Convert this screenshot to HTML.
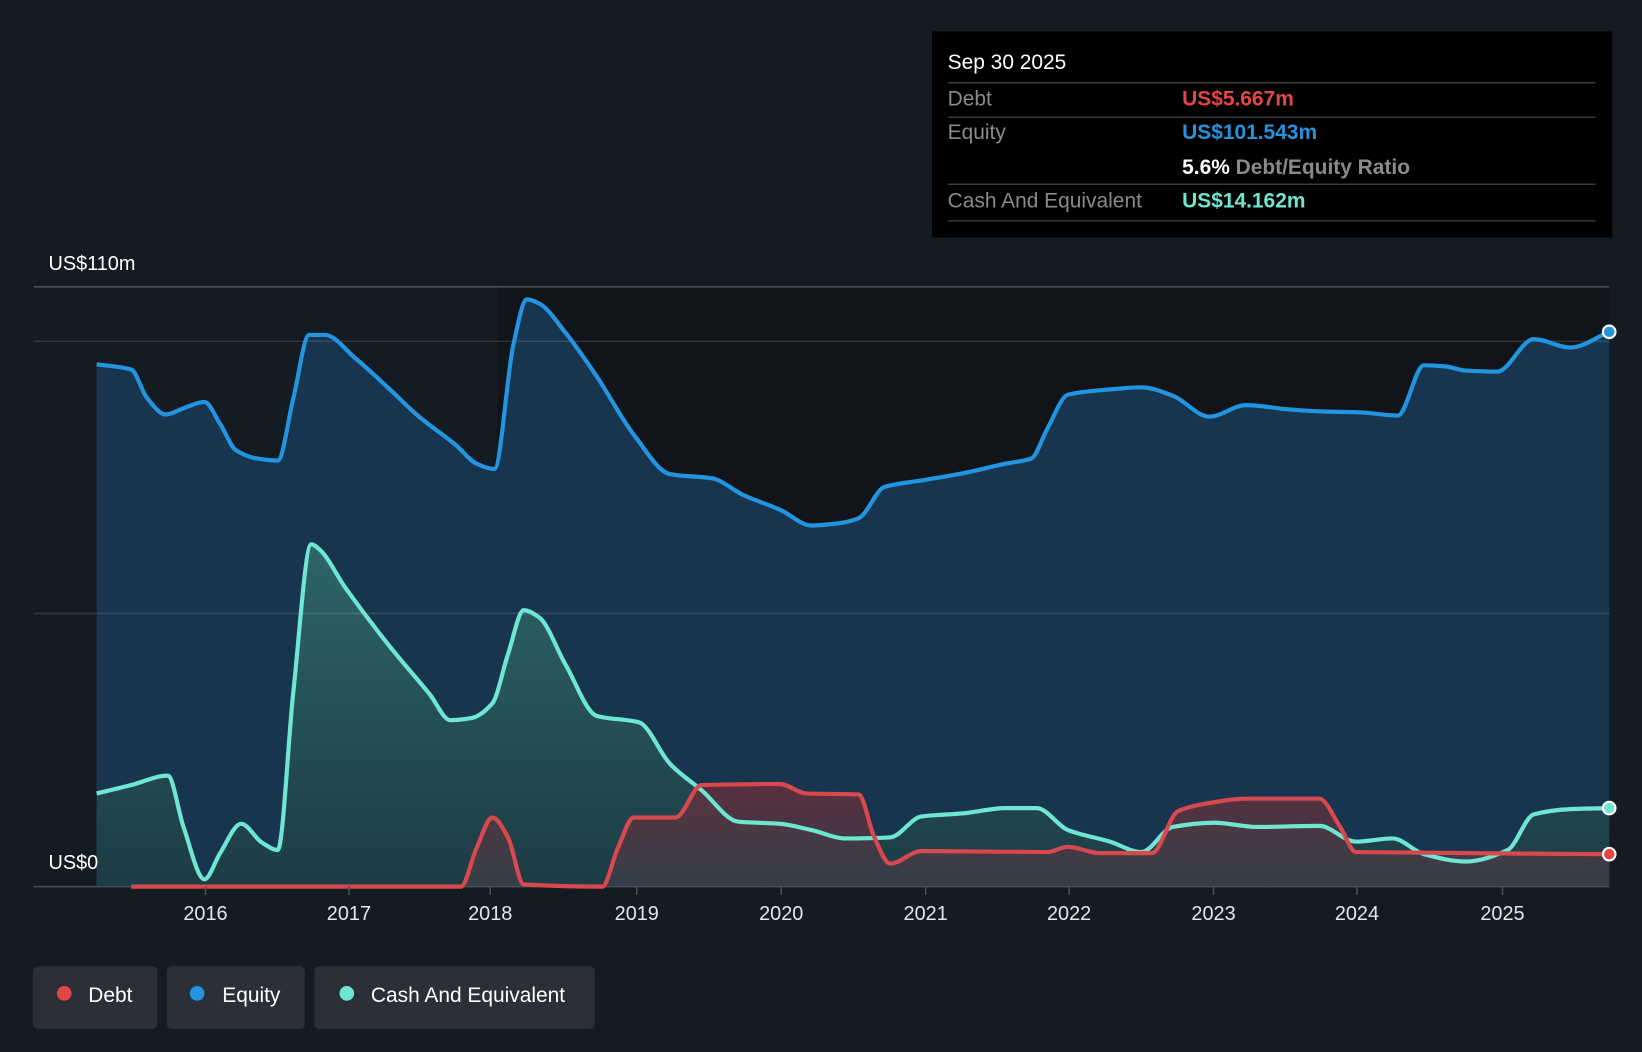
<!DOCTYPE html>
<html><head><meta charset="utf-8"><style>
html,body{margin:0;padding:0;background:#151b23;width:1642px;height:1052px;overflow:hidden}
svg{display:block;font-family:"Liberation Sans",Roboto,sans-serif}
</style></head><body>
<svg id="s" width="1642" height="1052" viewBox="0 0 1568 1005" xmlns="http://www.w3.org/2000/svg">
<defs>
<linearGradient id="cg" x1="0" y1="0" x2="0" y2="1"><stop offset="0" stop-color="#2f6a6c"/><stop offset="1" stop-color="#1d3c44"/></linearGradient>
<linearGradient id="dg" x1="0" y1="0" x2="0" y2="1"><stop offset="0" stop-color="#6a2e3a"/><stop offset="1" stop-color="#3a3f4a"/></linearGradient>
</defs>
<rect width="1568" height="1005" fill="#151b23"/>
<rect x="475" y="274" width="1062" height="573" fill="#111419"/>
<path id="ef" fill="#183550"/>
<path id="cf" fill="url(#cg)" opacity="0.9"/>
<path id="df" fill="url(#dg)" opacity="0.8"/>
<line x1="32" y1="274" x2="1537" y2="274" stroke="#4a4e56" stroke-width="1.5"/>
<line x1="32" y1="326" x2="1537" y2="326" stroke="#ffffff" stroke-opacity="0.12" stroke-width="1.5"/>
<line x1="32" y1="586" x2="1537" y2="586" stroke="#ffffff" stroke-opacity="0.12" stroke-width="1.5"/>
<line x1="32" y1="847" x2="1537" y2="847" stroke="#4a4e56" stroke-width="1.5"/>
<path id="el" fill="none" stroke="#2394e0" stroke-width="4" stroke-linejoin="round"/>
<path id="cl" fill="none" stroke="#6ee6d2" stroke-width="4" stroke-linejoin="round"/>
<path id="dl" fill="none" stroke="#d9484e" stroke-width="4" stroke-linejoin="round"/>
<circle cx="1537" cy="317" r="6" fill="#2394e0" stroke="#fff" stroke-width="2"/>
<circle cx="1537" cy="772" r="6" fill="#6ee6d2" stroke="#fff" stroke-width="2"/>
<circle cx="1537" cy="816" r="6" fill="#e64545" stroke="#fff" stroke-width="2"/>
<text x="46" y="258" fill="#fff" font-size="19">US$110m</text>
<text x="46" y="830" fill="#fff" font-size="19">US$0</text>
<g fill="#e6e6e6" font-size="19" text-anchor="middle" id="yrs"></g>
<g stroke="#4a4e56" stroke-width="1.5" id="ticks"></g>
<rect x="890" y="30" width="650" height="197" fill="#000"/>
<text x="905" y="66" fill="#fff" font-size="20">Sep 30 2025</text>
<g stroke="#3a3a3a" stroke-width="1.5">
<line x1="905" y1="79" x2="1524" y2="79"/><line x1="905" y1="112" x2="1524" y2="112"/>
<line x1="905" y1="176" x2="1524" y2="176"/><line x1="905" y1="211" x2="1524" y2="211"/></g>
<g font-size="20">
<text x="905" y="101" fill="#8a8a8a">Debt</text><text x="1129" y="101" fill="#e64545" font-weight="bold">US$5.667m</text>
<text x="905" y="133" fill="#8a8a8a">Equity</text><text x="1129" y="133" fill="#2394e0" font-weight="bold">US$101.543m</text>
<text x="1129" y="166" fill="#fff" font-weight="bold">5.6% <tspan fill="#8a8a8a" font-weight="bold">Debt/Equity Ratio</tspan></text>
<text x="905" y="198" fill="#8a8a8a">Cash And Equivalent</text><text x="1129" y="198" fill="#6ee6d2" font-weight="bold">US$14.162m</text>
</g>
<rect x="31" y="923" width="119" height="60" rx="5" fill="#2a2f38"/>
<rect x="159" y="923" width="132" height="60" rx="5" fill="#2a2f38"/>
<rect x="300" y="923" width="268" height="60" rx="5" fill="#2a2f38"/>
<circle cx="61" cy="949" r="7" fill="#e64545"/><circle cx="188" cy="949" r="7" fill="#2394e0"/><circle cx="331" cy="949" r="7" fill="#6ee6d2"/>
<g fill="#fff" font-size="20"><text x="84" y="957">Debt</text><text x="212" y="957">Equity</text><text x="354" y="957">Cash And Equivalent</text></g>
</svg>
<script>
var E=[[92,348],[125,353],[140,380],[158,396],[175,390],[195,384],[210,405],[225,430],[245,438],[265,440],[280,380],[295,320],[310,320],[340,343],[370,370],[400,398],[435,425],[455,443],[472,448],[490,330],[503,286],[515,290],[540,318],[570,360],[605,415],[640,453],[680,457],[710,473],[745,487],[775,502],[800,500],[820,495],[845,465],[880,459],[920,452],[960,443],[985,438],[1000,410],[1020,377],[1060,372],[1090,370],[1120,378],[1155,398],[1190,387],[1230,391],[1260,393],[1300,394],[1335,397],[1360,349],[1380,350],[1400,354],[1430,355],[1465,324],[1500,332],[1537,317]];
var C=[[92,758],[125,750],[160,741],[175,790],[195,840],[210,815],[230,787],[250,805],[265,812],[280,660],[297,520],[305,525],[330,562],[370,615],[410,663],[430,688],[450,686],[470,672],[485,625],[500,583],[515,590],[540,635],[570,684],[610,690],[640,730],[670,755],[705,785],[745,787],[775,793],[808,801],[850,800],[880,780],[920,777],[960,772],[990,772],[1020,793],[1060,804],[1090,814],[1120,790],[1160,786],[1200,790],[1260,789],[1295,804],[1330,801],[1360,816],[1400,823],[1440,812],[1465,778],[1500,773],[1537,772]];
var D=[[125,847],[440,847],[455,810],[470,781],[485,800],[500,845],[575,847],[590,810],[605,781],[645,781],[670,750],[745,749],[770,758],[820,759],[835,800],[850,825],[880,813],[1000,814],[1020,809],[1050,815],[1100,815],[1125,775],[1150,768],[1190,763],[1260,763],[1280,790],[1295,814],[1537,816]];
function sp(p){var n=p.length,dl=[],m=[];for(var i=0;i<n-1;i++)dl.push((p[i+1][1]-p[i][1])/(p[i+1][0]-p[i][0]));
m[0]=dl[0];m[n-1]=dl[n-2];for(i=1;i<n-1;i++){if(dl[i-1]*dl[i]<=0)m[i]=0;else{m[i]=2/(1/dl[i-1]+1/dl[i]);}}
var d="M"+p[0][0]+","+p[0][1];for(i=0;i<n-1;i++){var h=(p[i+1][0]-p[i][0])/3;d+=" C"+(p[i][0]+h)+","+(p[i][1]+m[i]*h)+" "+(p[i+1][0]-h)+","+(p[i+1][1]-m[i+1]*h)+" "+p[i+1][0]+","+p[i+1][1];}return d;}
function area(p){return sp(p)+" L"+p[p.length-1][0]+",847 L"+p[0][0]+",847 Z";}
function g(i){return document.getElementById(i)}
g("el").setAttribute("d",sp(E));g("ef").setAttribute("d",area(E));
g("cl").setAttribute("d",sp(C));g("cf").setAttribute("d",area(C));
g("dl").setAttribute("d",sp(D));g("df").setAttribute("d",area(D));
var X=[196,333,468,608,746,884,1021,1159,1296,1435],ns="http://www.w3.org/2000/svg";
X.forEach(function(x,i){var t=document.createElementNS(ns,"text");t.setAttribute("x",x);t.setAttribute("y",879);t.textContent=2016+i;g("yrs").appendChild(t);
var l=document.createElementNS(ns,"line");l.setAttribute("x1",x);l.setAttribute("x2",x);l.setAttribute("y1",847);l.setAttribute("y2",855);g("ticks").appendChild(l);});
</script>
</body></html>
